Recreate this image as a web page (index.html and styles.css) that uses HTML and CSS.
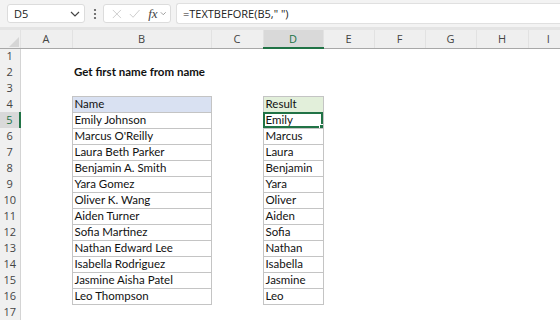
FILE: index.html
```html
<!DOCTYPE html>
<html lang="en">
<head>
    <meta charset="UTF-8">
    <title>Get first name from name</title>
    <link rel="stylesheet" href="styles.css">
</head>
<body>
    <div class="toolbar">
        <div class="namebox">
            <span>D5</span>
            <svg class="chev" width="10" height="6" viewBox="0 0 10 6"><path d="M1 1l4 4 4-4" fill="none" stroke="#444" stroke-width="1.2"/></svg>
        </div>
        <div class="dots">
            <svg width="4" height="12" viewBox="0 0 4 12"><circle cx="2" cy="2" r="1.1" fill="#555"/><circle cx="2" cy="6" r="1.1" fill="#555"/><circle cx="2" cy="10" r="1.1" fill="#555"/></svg>
        </div>
        <div class="fxbox">
            <svg width="12" height="12" viewBox="0 0 12 12"><path d="M1 1l10 10M11 1L1 11" stroke="#c8c8c8" stroke-width="1.1"/></svg>
            <svg width="14" height="12" viewBox="0 0 14 12"><path d="M1 6l4 4 8-9" fill="none" stroke="#c8c8c8" stroke-width="1.1"/></svg>
            <span class="fx">fx</span>
            <svg width="8" height="5" viewBox="0 0 8 5"><path d="M1 1l3 3 3-3" fill="none" stroke="#888" stroke-width="1"/></svg>
        </div>
        <div class="formula">=TEXTBEFORE(B5," ")</div>
    </div>

    <table class="sheet">
        <colgroup>
            <col style="width:20px"><col style="width:52px"><col style="width:139px"><col style="width:52px">
            <col style="width:60px"><col style="width:51px"><col style="width:51px"><col style="width:51px">
            <col style="width:52px"><col style="width:40px">
        </colgroup>
        <tr class="colhead">
            <th class="corner"><svg width="10" height="10" viewBox="0 0 10 10"><path d="M10 0v10H0z" fill="#d6d6d6"/></svg></th>
            <th>A</th><th>B</th><th>C</th><th class="sel">D</th><th>E</th><th>F</th><th>G</th><th>H</th><th>I</th>
        </tr>
        <tr><th class="rh">1</th><td colspan="9"></td></tr>
        <tr><th class="rh">2</th><td></td><td class="title">Get first name from name</td><td colspan="7"></td></tr>
        <tr><th class="rh">3</th><td colspan="9"></td></tr>
        <tr><th class="rh">4</th><td></td><td class="t hb">Name</td><td></td><td class="t hd">Result</td><td colspan="5"></td></tr>
        <tr><th class="rh rsel">5</th><td></td><td class="t">Emily Johnson</td><td></td><td class="t active">Emily<span class="handle"></span></td><td colspan="5"></td></tr>
        <tr><th class="rh">6</th><td></td><td class="t">Marcus O'Reilly</td><td></td><td class="t">Marcus</td><td colspan="5"></td></tr>
        <tr><th class="rh">7</th><td></td><td class="t">Laura Beth Parker</td><td></td><td class="t">Laura</td><td colspan="5"></td></tr>
        <tr><th class="rh">8</th><td></td><td class="t">Benjamin A. Smith</td><td></td><td class="t">Benjamin</td><td colspan="5"></td></tr>
        <tr><th class="rh">9</th><td></td><td class="t">Yara Gomez</td><td></td><td class="t">Yara</td><td colspan="5"></td></tr>
        <tr><th class="rh">10</th><td></td><td class="t">Oliver K. Wang</td><td></td><td class="t">Oliver</td><td colspan="5"></td></tr>
        <tr><th class="rh">11</th><td></td><td class="t">Aiden Turner</td><td></td><td class="t">Aiden</td><td colspan="5"></td></tr>
        <tr><th class="rh">12</th><td></td><td class="t">Sofia Martinez</td><td></td><td class="t">Sofia</td><td colspan="5"></td></tr>
        <tr><th class="rh">13</th><td></td><td class="t">Nathan Edward Lee</td><td></td><td class="t">Nathan</td><td colspan="5"></td></tr>
        <tr><th class="rh">14</th><td></td><td class="t">Isabella Rodriguez</td><td></td><td class="t">Isabella</td><td colspan="5"></td></tr>
        <tr><th class="rh">15</th><td></td><td class="t">Jasmine Aisha Patel</td><td></td><td class="t">Jasmine</td><td colspan="5"></td></tr>
        <tr><th class="rh">16</th><td></td><td class="t">Leo Thompson</td><td></td><td class="t">Leo</td><td colspan="5"></td></tr>
        <tr><th class="rh">17</th><td colspan="9"></td></tr>
    </table>
</body>
</html>
```
FILE: styles.css
```css
body {
    margin: 0;
    background-color: #fff;
    font-family: "Open Sans", "Noto Sans", sans-serif;
    overflow: hidden;
}
.toolbar {
    display: flex;
    align-items: center;
    height: 27px;
    padding: 0 0 0 7px;
    background-color: #f3f3f3;
    border-bottom: 3px solid #e4e4e4;
}
.namebox {
    display: flex;
    align-items: center;
    justify-content: space-between;
    width: 78px;
    height: 19px;
    padding: 0 4px 0 6px;
    box-sizing: border-box;
    background-color: #fff;
    border: 1px solid #dcdcdc;
    border-radius: 3px;
    font-size: 11px;
    color: #222;
}
.dots {
    display: flex;
    align-items: center;
    margin: 0 6px 0 8px;
}
.fxbox {
    display: flex;
    align-items: center;
    gap: 7px;
    width: 68px;
    height: 19px;
    padding: 0 4px 0 8px;
    box-sizing: border-box;
    background-color: #fff;
    border: 1px solid #dcdcdc;
    border-radius: 3px;
}
.fx {
    font-family: "Liberation Serif", serif;
    font-style: italic;
    font-size: 13px;
    color: #444;
    margin-left: 1px;
    margin-right: -5px;
}
.formula {
    flex: 1;
    height: 19px;
    margin-left: 5px;
    padding-left: 6px;
    background-color: #fff;
    border: 1px solid #e0e0e0;
    border-right: none;
    border-radius: 3px 0 0 3px;
    font-size: 11px;
    line-height: 19px;
    color: #222;
}
.sheet {
    table-layout: fixed;
    border-collapse: collapse;
    width: 568px;
}
.sheet tr {
    height: 16px;
}
.sheet td, .sheet th {
    padding: 0;
    line-height: 14px;
    overflow: hidden;
    white-space: nowrap;
}
.sheet tr.colhead {
    height: 18px;
}
.colhead th {
    background-color: #efefef;
    border-bottom: 1px solid #a8a8a8;
    border-left: 1px solid #e2e2e2;
    font-weight: normal;
    font-size: 11px;
    color: #444;
}
.colhead th.corner {
    border-left: none;
    text-align: right;
    vertical-align: bottom;
    padding: 0 1px 1px 0;
    line-height: 0;
}
.colhead th.sel {
    background-color: #d9d9d9;
    border-bottom: 2px solid #217346;
    color: #217346;
}
.rh {
    background-color: #f0f0f0;
    border-right: 1px solid #d4d4d4;
    font-weight: normal;
    font-size: 11px;
    color: #444;
    text-align: center;
}
.rh.rsel {
    background-color: #d9d9d9;
    border-right: 2px solid #217346;
    color: #217346;
}
.sheet td {
    font-family: "Lato", "Liberation Sans", sans-serif;
    font-size: 11.5px;
    color: #111;
    padding-left: 2px;
}
.title {
    font-weight: bold;
}
.t {
    border: 1px solid #c4c4c4;
}
.hb {
    background-color: #d9e1f2;
}
.hd {
    background-color: #e2efda;
}
.active {
    position: relative;
    outline: 2px solid #217346;
    outline-offset: -2px;
}
.handle {
    position: absolute;
    right: -3px;
    bottom: -3px;
    width: 5px;
    height: 5px;
    background-color: #217346;
    border: 1px solid #fff;
}
```
